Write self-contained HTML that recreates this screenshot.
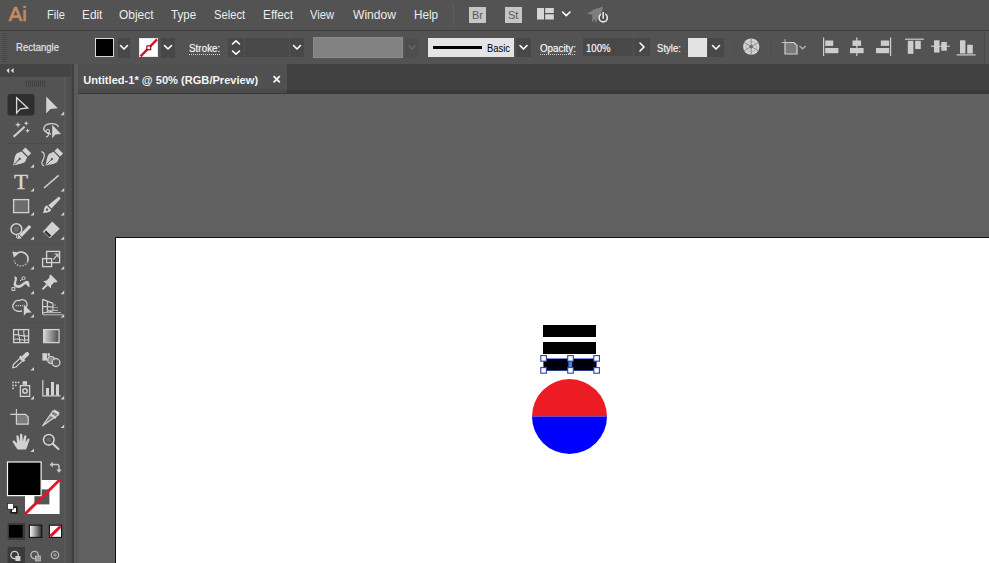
<!DOCTYPE html>
<html><head><meta charset="utf-8">
<title>Untitled-1</title>
<style>
*{box-sizing:border-box;margin:0;padding:0}
html,body{width:989px;height:563px;overflow:hidden;background:#606060;font-family:"Liberation Sans","DejaVu Sans",sans-serif;color:#e6e6e6}
#app{position:relative;width:989px;height:563px;overflow:hidden;background:#606060}
.abs{position:absolute}
#menubar{left:0;top:0;width:989px;height:30px;background:#535353}
#menuline{left:0;top:30px;width:989px;height:1px;background:#3e3e3e}
.mi{position:absolute;top:7px;font-size:13px;line-height:15px;color:#ececec;white-space:nowrap;transform-origin:0 0;display:block}
#ctrl{left:0;top:31px;width:989px;height:33px;background:#535353}
.cl{position:absolute;font-size:10px;line-height:12px;color:#f2f2f2;white-space:nowrap;transform-origin:0 0;text-shadow:0 0 1px rgba(255,255,255,.55)}
.dk{position:absolute;background:#484848}
.ul{position:absolute;height:1px;background-image:linear-gradient(90deg,#cfcfcf 50%,transparent 50%);background-size:2px 1px}
#tabstrip{left:73px;top:64px;width:916px;height:29px;background:#414141;border-bottom:3px solid #393939}
#tab{left:76px;top:64px;width:211px;height:29px;background:#505050;border-bottom:4px solid #4a4a4a;border-left:2px solid #484848}
#tab span{position:absolute;left:5.3px;top:10px;font-size:11.1px;line-height:12px;font-weight:bold;color:#f4f4f4;white-space:nowrap}
#tools{left:0;top:64px;width:72px;height:499px;background:#535353}
#toolsedge{left:71px;top:64px;width:3px;height:499px;background:#3f3f3f;border-left:1px solid #4a4a4a}
#toolsedge2{left:74px;top:64px;width:4px;height:499px;background:#5a5a5a}
#toolhead{left:0;top:64px;width:72px;height:13px;background:#444444}
#artboard{left:115px;top:237px;width:874px;height:326px;background:#fff;border-left:1px solid #111;border-top:1px solid #111}
svg{position:absolute;left:0;top:0}
</style></head><body>
<div id="app">
<div id="menubar" class="abs">
<span class="mi" style="left:8.8px;top:3px;font-size:20px;line-height:22px;color:#c48a64;-webkit-text-stroke:.7px #c48a64">Ai</span>
<span class="mi" style="left:47px;transform:scaleX(.85)">File</span>
<span class="mi" style="left:82px;transform:scaleX(.91)">Edit</span>
<span class="mi" style="left:119px;transform:scaleX(.92)">Object</span>
<span class="mi" style="left:171px;transform:scaleX(.89)">Type</span>
<span class="mi" style="left:214px;transform:scaleX(.86)">Select</span>
<span class="mi" style="left:263px;transform:scaleX(.91)">Effect</span>
<span class="mi" style="left:310px;transform:scaleX(.86)">View</span>
<span class="mi" style="left:353px;transform:scaleX(.93)">Window</span>
<span class="mi" style="left:414px;transform:scaleX(.9)">Help</span>
</div>
<div id="menuline" class="abs"></div>
<div id="ctrl" class="abs"></div>
<div id="tabstrip" class="abs"></div>
<div id="tab" class="abs"><span>Untitled-1* @ 50% (RGB/Preview)</span></div>
<div id="tools" class="abs"></div>
<div id="toolhead" class="abs"></div>
<div id="toolsedge" class="abs"></div>
<div id="toolsedge2" class="abs"></div>
<div id="artboard" class="abs"></div>
<div class="abs" style="left:78px;top:93px;width:911px;height:1px;background:#383838"></div>
<div class="abs" style="left:64px;top:77px;width:2px;height:486px;background:#585858"></div>
<div class="abs" style="left:66px;top:77px;width:5px;height:486px;background:#505050"></div>
<!-- control bar widgets -->
<div class="abs" style="left:2px;top:33px;width:5px;height:30px;background-image:linear-gradient(#474747 50%,transparent 50%);background-size:4px 2px"></div>
<span class="cl" style="left:15.5px;top:41.6px;transform:scaleX(.955);color:#dedede">Rectangle</span>
<div class="abs" style="left:95px;top:38px;width:19px;height:19px;background:#000;border:1px solid #d8d8d8"></div>
<div class="dk" style="left:118px;top:38px;width:12px;height:20px"></div>
<div class="abs" style="left:139px;top:38px;width:19px;height:19px;background:#fff;border:1px solid #e8e8e8"></div>
<div class="dk" style="left:161px;top:38px;width:14px;height:20px"></div>
<span class="cl" style="left:188.5px;top:43.3px;transform:scaleX(.99)">Stroke:</span>
<div class="ul" style="left:189px;top:54px;width:31px"></div>
<div class="dk" style="left:228px;top:38px;width:16px;height:19px"></div>
<div class="dk" style="left:245px;top:38px;width:44px;height:19px"></div>
<div class="dk" style="left:290px;top:38px;width:14px;height:19px"></div>
<div class="abs" style="left:313px;top:37px;width:90px;height:21px;background:#828282;border:1px solid #8c8c8c"></div>
<div class="abs" style="left:405px;top:38px;width:14px;height:19px;background:#4e4e4e"></div>
<div class="abs" style="left:428px;top:38px;width:86px;height:19px;background:#e4e4e4"></div>
<div class="abs" style="left:433px;top:46px;width:49px;height:3px;background:#000"></div>
<span class="cl" style="left:486.5px;top:43.3px;color:#000;text-shadow:none;transform:scaleX(.94)">Basic</span>
<div class="dk" style="left:516px;top:38px;width:15px;height:19px"></div>
<span class="cl" style="left:540px;top:43.3px;transform:scaleX(.98)">Opacity:</span>
<div class="ul" style="left:540px;top:54px;width:36px"></div>
<div class="dk" style="left:583px;top:38px;width:50px;height:18px"></div>
<span class="cl" style="left:586px;top:43.3px;transform:scaleX(.96)">100%</span>
<div class="dk" style="left:634px;top:38px;width:16px;height:18px"></div>
<span class="cl" style="left:657px;top:43.3px;transform:scaleX(.96)">Style:</span>
<div class="abs" style="left:688px;top:38px;width:19px;height:19px;background:#e3e3e3"></div>
<div class="dk" style="left:708px;top:38px;width:16px;height:19px"></div>
<div class="abs" style="left:734px;top:37px;width:1px;height:22px;background:#4d4d4d"></div>
<div class="abs" style="left:770px;top:37px;width:1px;height:22px;background:#4d4d4d"></div>
<div class="abs" style="left:453px;top:4px;width:1px;height:22px;background:#5e5e5e"></div>
<div class="abs" style="left:469px;top:7px;width:17px;height:16px;background:#c6c6c6"></div>
<span class="abs" style="left:472px;top:9px;font-size:11px;line-height:12px;color:#5a5a5a;transform:scaleX(1);transform-origin:0 0">Br</span>
<div class="abs" style="left:505px;top:7px;width:17px;height:16px;background:#c6c6c6"></div>
<span class="abs" style="left:508px;top:9px;font-size:11px;line-height:12px;color:#5a5a5a;transform:scaleX(1);transform-origin:0 0">St</span>
<div class="abs" style="left:984px;top:31px;width:1px;height:33px;background:#4a4a4a"></div><div class="abs" style="left:985px;top:31px;width:4px;height:33px;background:#565656"></div>
<!--CTRL-->
<svg width="989" height="563" viewBox="0 0 989 563" fill="none">
<!-- chevrons in control bar -->
<g stroke="#ffffff" stroke-width="1.6" stroke-linecap="round" stroke-linejoin="round">
<path d="M120.5 45.5 L124 49 L127.5 45.5"/>
<path d="M164.5 45.5 L168 49 L171.5 45.5"/>
<path d="M232.5 44 L236 40.8 L239.5 44"/>
<path d="M232.5 51 L236 54.2 L239.5 51"/>
<path d="M293.5 45.5 L297 49 L300.5 45.5"/>
<path d="M520 45.5 L523.5 49 L527 45.5"/>
<path d="M640 43 L644 47 L640 51"/>
<path d="M712.5 45.5 L716 49 L719.5 45.5"/>
<path d="M562.5 12 L566.3 15.6 L570 12"/>
</g>
<path d="M408.5 45.5 L412 49 L415.5 45.5" stroke="#666" stroke-width="1.5"/>
<!-- stroke none swatch -->
<path d="M140.6 56.4 L157 39.4" stroke="#d8102a" stroke-width="2.3"/>
<rect x="146.9" y="45.9" width="3.8" height="3.8" fill="#fff" stroke="#8a0014" stroke-width="1.1"/>
<!-- workspace switcher -->
<g fill="#d6d6d6"><rect x="537" y="8" width="7" height="11.5"/><rect x="545.2" y="8" width="8.6" height="5"/><rect x="545.2" y="14.3" width="8.6" height="5.2"/></g>
<!-- gpu rocket -->
<g>
<path d="M603 6.4 L594.5 9.2 L586.6 14 L592.4 14.6 L592 22.6 L594.6 19 L595.6 23 L598 17.4 L602 12 Z" fill="#7e7e7e"/>
<circle cx="603.2" cy="17.8" r="4.1" stroke="#e2e2e2" stroke-width="1.7" fill="#4c4c4c"/>
<path d="M603.2 11.6 L603.2 18.6" stroke="#4c4c4c" stroke-width="4"/>
<path d="M603.2 12 L603.2 18.8" stroke="#e6e6e6" stroke-width="1.6"/>
</g>
<!-- recolor wheel -->
<g>
<circle cx="751.2" cy="46.6" r="8.2" fill="#d4d4d4"/>
<g stroke="#808080" stroke-width=".9"><path d="M751.2 38.4 V54.8 M744.1 42.5 L758.3 50.7 M744.1 50.7 L758.3 42.5"/></g>
<circle cx="751.2" cy="46.6" r="1.9" fill="#707070"/>
<circle cx="751.2" cy="46.6" r="5.2" stroke="#a8a8a8" stroke-width=".8"/>
</g>
<!-- document setup -->
<g>
<path d="M785 42.5 H794 L797 45.5 V54 H785 Z" fill="#7a7a7a" stroke="#d0d0d0" stroke-width="1.2"/>
<path d="M781.6 42.5 H785 M785 39.2 V42.5" stroke="#c0c0c0" stroke-width="1"/>
<path d="M799.5 46 L802.6 48.8 L805.7 46" stroke="#b0b0b0" stroke-width="1.5"/>
</g>
<!-- align icons -->
<g fill="#cdcdcd">
<rect x="823" y="37.5" width="1.2" height="18.5"/><rect x="825.2" y="40.5" width="8" height="5.4"/><rect x="825.2" y="48" width="13.2" height="5.2"/>
<rect x="856.2" y="37.5" width="1.2" height="18.5"/><rect x="852.5" y="40.5" width="8.6" height="5.4"/><rect x="850" y="48" width="13.6" height="5.2"/>
<rect x="890" y="37.5" width="1.2" height="18.5"/><rect x="880.8" y="40.5" width="8.4" height="5.4"/><rect x="876" y="48" width="13.2" height="5.2"/>
<rect x="905" y="38.6" width="18.8" height="1.2"/><rect x="907.8" y="40.8" width="5.6" height="13"/><rect x="915.2" y="40.8" width="5.6" height="8.2"/>
<rect x="931" y="45.6" width="18.8" height="1.2"/><rect x="934" y="40.3" width="5.5" height="12.2"/><rect x="941.3" y="42" width="5.5" height="8.7"/>
<rect x="956.6" y="54.3" width="19" height="1.2"/><rect x="960" y="40.3" width="5.4" height="13.2"/><rect x="967.2" y="44.8" width="5.6" height="8.7"/>
</g>
</svg>
<svg width="80" height="563" viewBox="0 0 80 563" fill="none">
<defs>
<linearGradient id="gr1" x1="0" x2="1" y1="0" y2="0"><stop offset="0" stop-color="#d8d8d8"/><stop offset="1" stop-color="#4a4a4a"/></linearGradient>
<linearGradient id="gr2" x1="0" x2="1" y1="0" y2="0"><stop offset="0" stop-color="#ffffff"/><stop offset="1" stop-color="#2a2a2a"/></linearGradient>
<g id="nib"><path d="M0 0 C-2 -4 -5.9 -7.5 -5.6 -11 L-3.9 -15.2 L3.9 -15.2 L5.6 -11 C5.9 -7.5 2 -4 0 0 Z" fill="#d2d2d2"/><path d="M0 -1.5 L0 -8" stroke="#5a5a5a" stroke-width=".9"/><circle cx="0" cy="-9" r="1.2" fill="#5a5a5a"/><rect x="-3.9" y="-20.6" width="7.8" height="4.2" fill="#d2d2d2"/></g>
<path id="tri" d="M3.6 0 V3.6 H0 Z" fill="#d0d0d0"/>
</defs>
<!-- collapse arrows -->
<path d="M9.2 68 L6.4 70.6 L9.2 73.2 Z M13.6 68 L10.8 70.6 L13.6 73.2 Z" fill="#dcdcdc"/>
<!-- gripper -->
<g stroke="#3f3f3f" stroke-width="1"><path d="M26.5 80.5 V86.5 M28.5 80.5 V86.5 M30.5 80.5 V86.5 M32.5 80.5 V86.5 M34.5 80.5 V86.5 M36.5 80.5 V86.5 M38.5 80.5 V86.5 M40.5 80.5 V86.5 M42.5 80.5 V86.5 M44.5 80.5 V86.5"/></g>
<!-- group separators -->
<g stroke="#4a4a4a" stroke-width="1"><path d="M8 143.5 H64"/></g><g stroke="#4e4e4e" stroke-width="1"><path d="M8 243.5 H64 M8 322.5 H64"/></g>
<!-- selection (active) -->
<rect x="7.5" y="94" width="27" height="21.5" rx="3" fill="#2e2e2e"/>
<path d="M16.6 97.8 L16.6 113 L20.4 108.8 L27.8 108 Z" stroke="#dadada" stroke-width="1.3" stroke-linejoin="miter"/>
<!-- direct selection -->
<path d="M46.2 96.6 L46.2 113.6 L50.4 109 L57.8 108.2 Z" fill="#d2d2d2"/>
<use href="#tri" x="60.6" y="111.6"/>
<!-- magic wand -->
<path d="M13.6 136.8 L24.6 126.8" stroke="#d2d2d2" stroke-width="2.1"/>
<path d="M18 121.8 L18.8 124 L21 124.8 L18.8 125.6 L18 127.8 L17.2 125.6 L15 124.8 L17.2 124 Z M26.2 121 L26.9 122.6 L28.5 123.3 L26.9 124 L26.2 125.6 L25.5 124 L23.9 123.3 L25.5 122.6 Z M27.6 128.4 L28.3 130 L29.9 130.7 L28.3 131.4 L27.6 133 L26.9 131.4 L25.3 130.7 L26.9 130 Z" fill="#d2d2d2"/>
<!-- lasso -->
<path d="M51 134 C45 133.5 42.5 129.5 44.5 126.5 C47 122.5 57 122.5 58.5 127" stroke="#d0d0d0" stroke-width="1.3"/>
<circle cx="47.8" cy="131.2" r="1.7" stroke="#d0d0d0" stroke-width="1.1"/>
<path d="M48.5 133 C49 135.5 47.5 136.8 46 137" stroke="#d0d0d0" stroke-width="1.1"/>
<path d="M52.2 124.8 L52.2 138.2 L55.4 134.6 L61 134 Z" fill="#d2d2d2"/>
<!-- pen -->
<use href="#nib" transform="translate(13,165.6) rotate(45) scale(1.05)"/>
<use href="#tri" x="30.4" y="164.1"/>
<!-- curvature -->
<use href="#nib" transform="translate(45.4,165.6) rotate(45) scale(1.02)"/>
<path d="M41.4 151.6 C45.6 152.4 44.6 157.6 42.6 160.6 C41.2 163 42 165 44 166" stroke="#d0d0d0" stroke-width="1.2"/>
<!-- type -->
<text x="21" y="188.8" text-anchor="middle" font-family="'Liberation Serif',serif" font-size="20.5" fill="#d4d4d4" stroke="#d4d4d4" stroke-width=".35" textLength="14" lengthAdjust="spacingAndGlyphs">T</text>
<use href="#tri" x="30.4" y="188"/>
<!-- line -->
<path d="M44 188 L58.6 175.4" stroke="#d0d0d0" stroke-width="1.6"/>
<use href="#tri" x="60.6" y="188"/>
<!-- rectangle -->
<rect x="13.6" y="199.6" width="15" height="13" fill="#6c6c6c" stroke="#d2d2d2" stroke-width="1.3"/>
<use href="#tri" x="30.4" y="212"/>
<!-- paintbrush -->
<g transform="translate(42.8,213.6) rotate(46.5)"><path d="M0 0 C-.6 -3 -4.4 -4.6 -3.2 -8.6 L3.2 -8.6 C4.4 -4.6 .6 -3 0 0 Z" fill="#d2d2d2"/><path d="M-2.3 -9.8 L2.3 -9.8 L1.3 -23.4 L-1.3 -23.4 Z" fill="#d2d2d2"/><circle cx="0" cy="-5.8" r="1.2" fill="#5a5a5a"/></g>
<use href="#tri" x="60.6" y="212"/>
<!-- shaper -->
<circle cx="16.4" cy="229.2" r="5.4" stroke="#d0d0d0" stroke-width="1.5"/>
<circle cx="16.4" cy="229.2" r="2.6" fill="#6a6a6a"/>
<path d="M20.6 235.8 L30.2 226" stroke="#d4d4d4" stroke-width="3.2"/>
<path d="M17.4 239 L18.2 234.6 L21.8 238.2 Z" fill="#d4d4d4"/>
<path d="M16.6 234.6 V238" stroke="#d0d0d0" stroke-width="1"/>
<use href="#tri" x="30.4" y="236.2"/>
<!-- eraser -->
<path d="M52.2 221.4 L59.7 228.8 L49.8 238.3 L42.8 231.8 Z" fill="#d2d2d2"/><path d="M46 230.6 L51.2 235.6 L49.4 237.2 L44.2 232.2 Z" fill="#333"/>
<use href="#tri" x="60.6" y="236.2"/>
<!-- rotate -->
<path d="M15.6 254.6 A7 7 0 0 1 27.6 261.4" stroke="#d2d2d2" stroke-width="1.7"/>
<path d="M27.6 261.4 A7 7 0 0 1 14.2 260.4" stroke="#b4b4b4" stroke-width="1.5" stroke-dasharray="1.6 1.2"/>
<path d="M12.4 251.6 L19.2 252.8 L13.8 257.8 Z" fill="#d2d2d2"/>
<use href="#tri" x="30.4" y="266"/>
<!-- scale -->
<rect x="46.6" y="251.4" width="13" height="11.2" stroke="#d2d2d2" stroke-width="1.3"/>
<rect x="42.6" y="258.6" width="9" height="8" stroke="#d2d2d2" stroke-width="1.3"/>
<path d="M53.4 259.6 L57.4 254.6 M54.6 254 H58 V257.4" stroke="#d2d2d2" stroke-width="1.2"/>
<use href="#tri" x="60.6" y="266"/>
<!-- width -->
<path d="M14 277 C17 275 17.6 279 16.4 281.4 C15 284.6 18.6 286.4 21.6 284 C24.4 281.6 27 279.4 28.6 281.6 C29.8 283.4 29.4 285.6 29.6 287.4 L27.4 286 C26.4 284 25.4 283.6 23.6 285.6 C21 288.4 16.6 288.6 14.6 286.6 C12.8 284.8 14 282 14.6 280.4 C15.2 278.6 14.6 278 14 277 Z" fill="#d2d2d2"/>
<circle cx="18" cy="283.8" r="1.5" fill="#555"/>
<circle cx="23.6" cy="278.2" r="1.5" stroke="#d2d2d2" stroke-width="1"/>
<rect x="12" y="287.6" width="2.8" height="2.8" stroke="#d2d2d2" stroke-width="1"/>
<path d="M20 280.8 L22.4 279.2" stroke="#d2d2d2" stroke-width="1"/>
<use href="#tri" x="30.4" y="290.6"/>
<!-- pin -->
<g transform="translate(42.4,289.4) rotate(45)"><path d="M-1 0 L1 0 L1.1 -6.6 L-1.1 -6.6 Z" fill="#d2d2d2"/><path d="M-5.4 -6.6 H5.4 L3.4 -9 V-13.4 L4.8 -14.6 V-16.4 H-4.8 V-14.6 L-3.4 -13.4 V-9 Z" fill="#d2d2d2"/></g>
<use href="#tri" x="60.6" y="290.6"/>
<!-- shape builder -->
<path d="M14.2 303 C15 300.4 18 300 19.6 300.6 C22 298.6 26 299.8 26.8 303 C27.6 305.6 26.6 307 25 308 M22 311 C18 312 14 310.6 13 307.6 C12.4 305.6 13 304 14.2 303" stroke="#d0d0d0" stroke-width="1.3"/>
<path d="M15.6 305.6 H23" stroke="#d0d0d0" stroke-width="1.2" stroke-dasharray="1.2 1"/>
<path d="M23.8 304.6 L23.8 315.8 L26.6 312.8 L31.6 312.4 Z" fill="#d2d2d2"/>
<use href="#tri" x="30.4" y="314"/>
<!-- perspective grid -->
<path d="M42.6 299.4 V314.6 M42.6 299.4 L53 303.4 M42.6 306.4 L53 307.2 M42.6 313 L53 311 M47.4 301.2 V312.2 M53 303.4 V311" stroke="#d2d2d2" stroke-width="1.2"/>
<path d="M47 310.4 H58 M45.6 312.6 H61 M43 314.8 H63" stroke="#bdbdbd" stroke-width="1"/>
<path d="M53 305 H56 M53 307.6 H58" stroke="#9a9a9a" stroke-width="1"/>
<use href="#tri" x="60.6" y="314"/>
<!-- mesh -->
<rect x="13.6" y="329.6" width="15" height="13" stroke="#d2d2d2" stroke-width="1.3"/>
<path d="M13.6 335 C18 333 23 338 28.6 335.6 M13.6 339.4 C18 337.6 23 341.6 28.6 339.4 M18.6 329.6 C17 334 21 338 19.4 342.6 M24 329.6 C22.4 334 26 338 24.6 342.6" stroke="#d2d2d2" stroke-width="1.1"/>
<!-- gradient -->
<rect x="43.6" y="329.6" width="15.4" height="13" fill="url(#gr1)" stroke="#d2d2d2" stroke-width="1.3"/>
<!-- eyedropper -->
<g transform="translate(12.6,367.8) rotate(46.5)"><path d="M0 0 L-1.8 -3 L-1.8 -12 L1.8 -12 L1.8 -3 Z" stroke="#d2d2d2" stroke-width="1.2"/><rect x="-3.4" y="-14.4" width="6.8" height="2.4" fill="#d2d2d2"/><path d="M-2 -14.4 L-2 -20 C-2 -22.6 2 -22.6 2 -20 L2 -14.4 Z" fill="#d2d2d2"/></g>
<use href="#tri" x="30.4" y="367"/>
<!-- blend -->
<rect x="42.4" y="353.2" width="4.6" height="7.4" fill="#d2d2d2"/><rect x="47.6" y="353.2" width="2.2" height="3" fill="#d2d2d2"/>
<circle cx="51.2" cy="360" r="3.5" fill="#8a8a8a" stroke="#d2d2d2" stroke-width="1.2"/>
<circle cx="56" cy="362.6" r="3.9" fill="#5c5c5c" stroke="#d2d2d2" stroke-width="1.3"/>
<!-- symbol sprayer -->
<g fill="#d2d2d2"><rect x="12.2" y="381.6" width="1.6" height="1.6"/><rect x="15" y="381.6" width="1.6" height="1.6"/><rect x="17.8" y="381.6" width="1.6" height="1.6"/><rect x="12.2" y="384.6" width="1.6" height="1.6"/><rect x="15" y="384.6" width="1.6" height="1.6"/><rect x="12.2" y="387.6" width="1.6" height="1.6"/><rect x="22.6" y="381.2" width="4.4" height="3.6"/></g>
<rect x="20.4" y="385.6" width="9.2" height="10.8" stroke="#d2d2d2" stroke-width="1.3"/>
<circle cx="25" cy="391" r="2.2" stroke="#d2d2d2" stroke-width="1.5"/>
<use href="#tri" x="30.4" y="395.8"/>
<!-- column graph -->
<path d="M42.8 380 V395.8 H60.6" stroke="#d2d2d2" stroke-width="1.2"/>
<rect x="46" y="388" width="3" height="7.4" fill="#d2d2d2"/><rect x="51" y="382" width="3" height="13.4" fill="#d2d2d2"/><rect x="56" y="384.4" width="3" height="11" fill="#d2d2d2"/>
<use href="#tri" x="60.6" y="395.8"/>
<!-- artboard -->
<path d="M16.4 414.4 H25.6 L28.2 417 V424.2 H16.4 Z" fill="#7c7c7c" stroke="#d2d2d2" stroke-width="1.2"/>
<path d="M10.4 414.4 H16.4 M16.4 409 V414.4" stroke="#d2d2d2" stroke-width="1.1"/>
<!-- slice -->
<path d="M42.6 425.8 L52.8 411 L58.8 414.6 Z" fill="#808080" stroke="#d2d2d2" stroke-width="1.2" stroke-linejoin="round"/>
<path d="M52.8 411 L54.6 409.4 L59.6 412.6 L58.8 414.6 Z" fill="#d2d2d2"/>
<path d="M50.6 414.6 L56 418" stroke="#d2d2d2" stroke-width="2.4"/>
<use href="#tri" x="60.6" y="424.4"/>
<!-- hand -->
<path d="M17.6 449.6 C15.6 446.6 14 444 12.8 442.2 C12 441 13.4 440 14.6 441 L17 443.4 L16.4 436.6 C16.2 435 18.2 434.8 18.6 436.4 L19.8 441.6 L20 435 C20 433.4 22.2 433.4 22.4 435 L22.8 441.6 L24.2 436 C24.6 434.6 26.6 435 26.4 436.6 L25.6 442.6 L27.6 439 C28.4 437.8 30 438.6 29.4 440 C28.4 443 27.4 446.6 26 449.6 Z" fill="#d2d2d2"/>
<use href="#tri" x="30.4" y="448.4"/>
<!-- zoom -->
<circle cx="48.8" cy="439.8" r="5.3" stroke="#d2d2d2" stroke-width="1.6"/>
<circle cx="48.8" cy="439.8" r="2.4" fill="#676767"/>
<path d="M52.8 443.8 L58.4 449" stroke="#d2d2d2" stroke-width="2.2" stroke-linecap="round"/>
<!-- fill / stroke swatches -->
<rect x="25" y="480" width="34.6" height="34" fill="#fff"/>
<rect x="34.4" y="489.4" width="15" height="15" fill="#555"/>
<path d="M24.8 514.2 L59.8 479.8" stroke="#e0142a" stroke-width="2.9"/>
<rect x="7.5" y="462" width="33.6" height="33.6" fill="#000" stroke="#f4f4f4" stroke-width="1.2"/>
<!-- swap -->
<path d="M52 464.6 H57 Q59 464.6 59 466.6 V470" stroke="#c8c8c8" stroke-width="1.5"/>
<path d="M52.8 461.8 L49.6 464.6 L52.8 467.4 Z M56.2 469.4 L59 472.8 L61.8 469.4 Z" fill="#c8c8c8"/>
<!-- default -->
<rect x="11.2" y="507.2" width="5.6" height="5.6" fill="#fff" stroke="#111" stroke-width="1.5"/>
<rect x="7.6" y="503.4" width="5.8" height="5.8" fill="#fff" stroke="#222" stroke-width=".7"/>
<!-- color / gradient / none -->
<rect x="7.6" y="523" width="17.4" height="17" fill="#3a3a3a"/>
<rect x="9" y="525" width="13.6" height="12.6" fill="#000"/>
<rect x="29.4" y="525.2" width="12.4" height="12.2" fill="url(#gr2)" stroke="#111" stroke-width="1.1"/>
<rect x="49.4" y="525.2" width="12.2" height="12.2" fill="#fff" stroke="#111" stroke-width="1.1"/>
<path d="M50.4 536.4 L60.6 526.2" stroke="#e0142a" stroke-width="3"/>
<!-- draw modes -->
<rect x="7.6" y="547" width="17.4" height="16" fill="#3a3a3a"/>
<circle cx="14.6" cy="555" r="3.7" stroke="#cfcfcf" stroke-width="1.3"/><rect x="15.4" y="556" width="5" height="5" fill="#cfcfcf"/>
<circle cx="34.6" cy="555" r="3.7" stroke="#bdbdbd" stroke-width="1.3"/><rect x="35.4" y="556" width="5" height="5" fill="#9a9a9a" stroke="#bdbdbd" stroke-width=".8"/>
<circle cx="55" cy="555" r="3.7" stroke="#b2b2b2" stroke-width="1.3"/><circle cx="55" cy="555" r="1.8" fill="#8c8c8c"/>
</svg>
<svg width="989" height="563" viewBox="0 0 989 563" fill="none">
<!-- tab close -->
<path d="M273.6 76.2 L279.8 82.4 M279.8 76.2 L273.6 82.4" stroke="#f4f4f4" stroke-width="1.9"/>
<!-- artwork -->
<rect x="543" y="325" width="53" height="12" fill="#000"/>
<rect x="543" y="342" width="53" height="12" fill="#000"/>
<rect x="543.5" y="359" width="53" height="12" fill="#00000c"/>
<path d="M532 416.5 A37.5 37.5 0 0 1 607 416.5 Z" fill="#ed1c24"/>
<path d="M532 416.5 A37.5 37.5 0 0 0 607 416.5 Z" fill="#0000ff"/>
<!-- selection -->
<rect x="543.5" y="358.5" width="53" height="12" stroke="#3c5ccc" stroke-width="1" opacity=".7"/>
<g fill="#fff" stroke="#2c44a8" stroke-width="1.1">
<rect x="540.8" y="355.6" width="5.6" height="5.6"/><rect x="567.7" y="355.6" width="5.6" height="5.6"/><rect x="593.8" y="355.6" width="5.6" height="5.6"/>
<rect x="540.8" y="367.6" width="5.6" height="5.6"/><rect x="567.7" y="367.6" width="5.6" height="5.6"/><rect x="593.8" y="367.6" width="5.6" height="5.6"/>
</g>
<rect x="568.4" y="361.8" width="3.8" height="5.4" fill="#4c7cf6"/>
</svg>
<!--ICONS-->
</div>
</body></html>
